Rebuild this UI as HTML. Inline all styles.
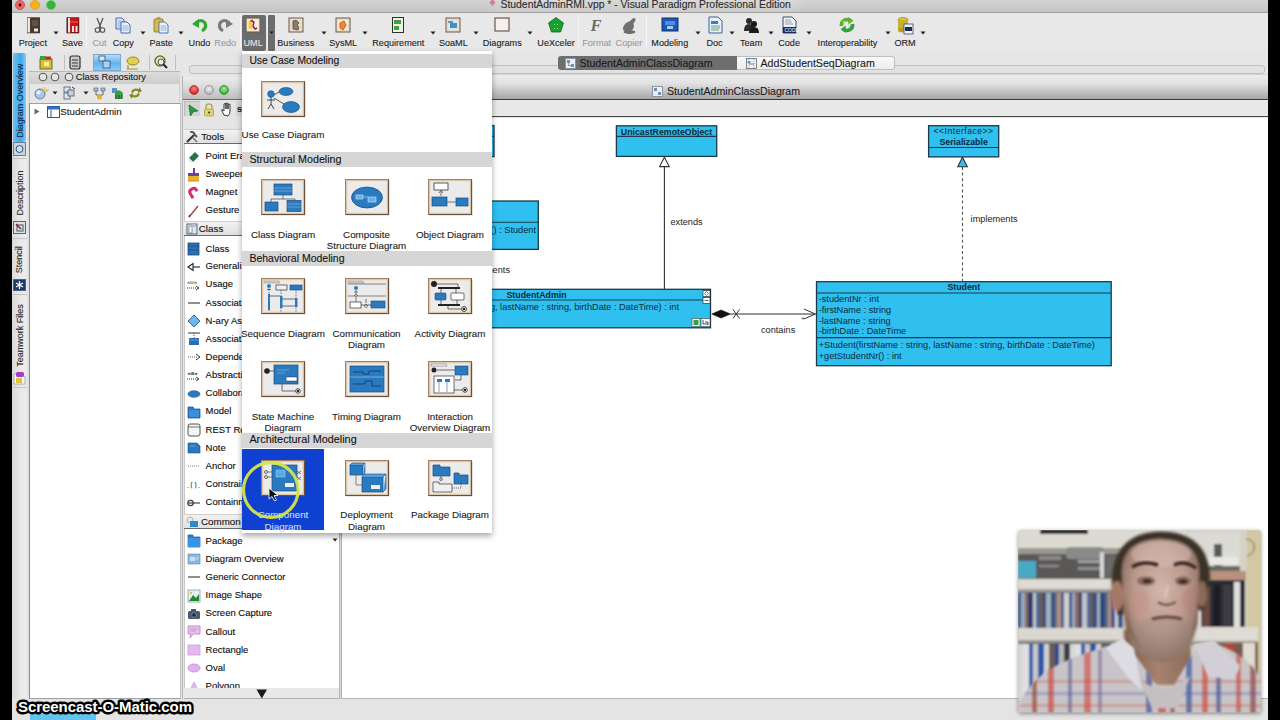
<!DOCTYPE html><html><head><meta charset="utf-8"><style>
*{box-sizing:border-box;margin:0;padding:0}
html,body{width:1280px;height:720px;overflow:hidden;background:#e4e4e4;font-family:"Liberation Sans",sans-serif;color:#222}
.a{position:absolute}
.t{position:absolute;white-space:nowrap;-webkit-text-stroke:0.1px currentColor}
svg{position:absolute;overflow:visible}
</style></head><body><div class="a" style="left:0px;top:0px;width:1280px;height:720px;background:#e4e4e4"></div><div class="a" style="left:12px;top:0px;width:1256px;height:13px;background:linear-gradient(#d4d4d4,#c4c4c4);border-bottom:1px solid #a0a0a0"></div><svg style="left:14.3px;top:-1.3px;" width="12" height="12" viewBox="0 0 12 12"><circle cx="6" cy="6" r="4.6" fill="#e86868" stroke="#d04848" stroke-width="0.8"/></svg><svg style="left:29px;top:-1.3px;" width="12" height="12" viewBox="0 0 12 12"><circle cx="6" cy="6" r="4.6" fill="#f4b020" stroke="#e8a010" stroke-width="0.8"/></svg><svg style="left:44.5px;top:-1.3px;" width="12" height="12" viewBox="0 0 12 12"><circle cx="6" cy="6" r="4.6" fill="#38b040" stroke="#60d060" stroke-width="0.8"/></svg><svg style="left:18.3px;top:2.7px;" width="4" height="4" viewBox="0 0 4 4"><circle cx="2" cy="2" r="1.4" fill="#500808"/></svg><svg style="left:488.5px;top:-1px;" width="7" height="8" viewBox="0 0 7 8"><path d="M3.5 0 L6.5 3.5 L3.5 7 L0.5 3.5Z" fill="#c87890"/></svg><div class="a" style="left:486px;top:0px;width:320px;height:12px;background:linear-gradient(90deg,rgba(255,255,255,0),rgba(255,255,255,0.12) 5%,rgba(255,255,255,0.12) 95%,rgba(255,255,255,0))"></div><div class="t" style="left:500.5px;top:-1.80px;font-size:10.4px;line-height:13.0px;color:#2a2a2a">StudentAdminRMI.vpp * - Visual Paradigm Professional Edition</div><div class="a" style="left:12px;top:13px;width:1256px;height:39px;background:#e8e8e8"></div><div class="a" style="left:242px;top:14.5px;width:24px;height:36px;background:#6c6c6c;border-radius:2px"></div><div class="a" style="left:268px;top:14.5px;width:7px;height:36px;background:#6c6c6c;border-radius:1px"></div><svg style="left:269px;top:30.5px;" width="5" height="4" viewBox="0 0 5 4"><path d="M0.5 0.5H4.5L2.5 3Z" fill="#1a1a1a"/></svg><svg style="left:24.799999999999997px;top:17px;" width="16" height="17" viewBox="0 0 16 17"><rect x="2" y="0.3" width="13" height="16" fill="#4a3a2e"/><rect x="2.5" y="1" width="2.5" height="14.5" fill="#f0e8d8"/><path d="M7 4H13M7 6H13M7 8H13" stroke="#9a8a7a" stroke-width="0.6"/><rect x="9" y="11.5" width="4" height="3" fill="#f0e8d8"/></svg><div class="t" style="left:15.0px;top:37.56px;font-size:9.1px;line-height:11.38px;width:35.6px;text-align:center;color:#222">Project</div><svg style="left:64.4px;top:17px;" width="16" height="17" viewBox="0 0 16 17"><rect x="2.5" y="0.3" width="12.7" height="16" fill="#3a1a1a"/><rect x="3.5" y="1" width="11" height="14.5" fill="#c01818"/><rect x="4" y="1" width="2" height="14.5" fill="#f0e0e0"/><rect x="8" y="9" width="2" height="6" fill="#f0e0e0"/><rect x="11.5" y="9" width="2" height="6" fill="#f0e0e0"/><path d="M6 5 L14 5" stroke="#ff4040" stroke-width="1.5"/></svg><div class="t" style="left:59.5px;top:37.56px;font-size:9.1px;line-height:11.38px;width:25.799999999999997px;text-align:center;color:#222">Save</div><svg style="left:91.55px;top:17px;" width="16" height="17" viewBox="0 0 16 17"><path d="M5 1 L9 11 M11 1 L7 11" stroke="#555" stroke-width="1.3" fill="none"/><circle cx="5.5" cy="13" r="2.3" fill="none" stroke="#555" stroke-width="1.1"/><circle cx="10.5" cy="13" r="2.3" fill="none" stroke="#555" stroke-width="1.1"/></svg><div class="t" style="left:88.5px;top:37.56px;font-size:9.1px;line-height:11.38px;width:22.099999999999994px;text-align:center;color:#9c9c9c">Cut</div><svg style="left:115.30000000000001px;top:17px;" width="16" height="17" viewBox="0 0 16 17"><path d="M1 1H7L9 3V12H1Z" fill="#dcecfc" stroke="#3a5aa0" stroke-width="0.9"/><path d="M2.5 4H7.5M2.5 6H7.5M2.5 8H7.5M2.5 10H7.5" stroke="#5a80c0" stroke-width="0.6"/><path d="M6 5H12L15 8V16H6Z" fill="#e8f4fc" stroke="#3a5aa0" stroke-width="0.9"/><path d="M7.5 9H13.5M7.5 11H13.5M7.5 13H13.5" stroke="#5a80c0" stroke-width="0.6"/></svg><div class="t" style="left:108.8px;top:37.56px;font-size:9.1px;line-height:11.38px;width:29.000000000000014px;text-align:center;color:#222">Copy</div><svg style="left:153.2px;top:17px;" width="16" height="17" viewBox="0 0 16 17"><rect x="1" y="2" width="9" height="13" rx="1" fill="#d8b848" stroke="#8a7020" stroke-width="0.8"/><rect x="3.5" y="0" width="4" height="3" rx="1" fill="#c0a030"/><path d="M6 5H12L15 8V16H6Z" fill="#e8f2fc" stroke="#4070b0" stroke-width="0.9"/><path d="M7.5 9H13.5M7.5 11H13.5M7.5 13H13.5" stroke="#5a80c0" stroke-width="0.6"/></svg><div class="t" style="left:146.7px;top:37.56px;font-size:9.1px;line-height:11.38px;width:29.0px;text-align:center;color:#222">Paste</div><svg style="left:191.5px;top:17px;" width="16" height="17" viewBox="0 0 16 17"><path d="M4 6 Q9 1 13 6 Q15 11 10 14" stroke="#30a830" stroke-width="3.2" fill="none"/><path d="M0 7 L7 2 L7 11Z" fill="#30a830"/></svg><div class="t" style="left:184.6px;top:37.56px;font-size:9.1px;line-height:11.38px;width:29.80000000000001px;text-align:center;color:#222">Undo</div><svg style="left:217.2px;top:17px;" width="16" height="17" viewBox="0 0 16 17"><path d="M12 6 Q7 1 3 6 Q1 11 6 14" stroke="#7a7a7a" stroke-width="3.2" fill="none"/><path d="M16 7 L9 2 L9 11Z" fill="#7a7a7a"/></svg><div class="t" style="left:211.4px;top:37.56px;font-size:9.1px;line-height:11.38px;width:27.599999999999994px;text-align:center;color:#9c9c9c">Redo</div><svg style="left:245.15px;top:17px;" width="16" height="17" viewBox="0 0 16 17"><rect x="1" y="1" width="14" height="14" fill="#e8dcc8" stroke="#6a5a48" stroke-width="1"/><rect x="2.5" y="2.5" width="11" height="11" fill="#f8f0e0"/><rect x="3.5" y="4" width="4" height="8" fill="#f0d040"/><path d="M6 3.5 L9 5 L8 9 L10 12 L12 11" stroke="#8a2060" stroke-width="1.4" fill="none"/><path d="M5 4 L8 3" stroke="#d03030" stroke-width="1.2"/></svg><div class="t" style="left:240.7px;top:37.56px;font-size:9.1px;line-height:11.38px;width:24.900000000000034px;text-align:center;color:#e6e6e6">UML</div><svg style="left:287.75px;top:17px;" width="16" height="17" viewBox="0 0 16 17"><rect x="1" y="1" width="14" height="14" fill="#e8dcc8" stroke="#6a5a48" stroke-width="1"/><path d="M5 4 Q9 2 11 6 L9 8 Q12 10 10 13 L5 12 Z" fill="#8a8070" stroke="#504838" stroke-width="0.8"/></svg><div class="t" style="left:274.5px;top:37.56px;font-size:9.1px;line-height:11.38px;width:42.5px;text-align:center;color:#222">Business</div><svg style="left:335.2px;top:17px;" width="16" height="17" viewBox="0 0 16 17"><rect x="1" y="1" width="14" height="14" fill="#e8dcc8" stroke="#6a5a48" stroke-width="1"/><rect x="3" y="3" width="10" height="10" fill="#f8e8d8"/><path d="M5 6 L9 4 L11 8 L8 13 L5 11Z" fill="#e89030" stroke="#c04020" stroke-width="0.8"/></svg><div class="t" style="left:327.0px;top:37.56px;font-size:9.1px;line-height:11.38px;width:32.39999999999998px;text-align:center;color:#222">SysML</div><svg style="left:390.35px;top:17px;" width="16" height="17" viewBox="0 0 16 17"><rect x="2" y="0" width="12" height="16" fill="#303030"/><rect x="3" y="1" width="10" height="14" fill="#f0f0e8"/><rect x="4" y="3" width="7" height="4" fill="#40a040"/><rect x="4" y="9" width="5" height="4" fill="#40a040"/></svg><div class="t" style="left:368.8px;top:37.56px;font-size:9.1px;line-height:11.38px;width:59.099999999999966px;text-align:center;color:#222">Requirement</div><svg style="left:445.35px;top:17px;" width="16" height="17" viewBox="0 0 16 17"><rect x="1" y="1" width="14" height="14" fill="#e8dcc8" stroke="#6a5a48" stroke-width="1"/><rect x="3" y="3" width="10" height="10" fill="#d8e8f0"/><rect x="5" y="6" width="7" height="5" fill="#4090d0"/><path d="M3 5H8" stroke="#203050"/></svg><div class="t" style="left:436.7px;top:37.56px;font-size:9.1px;line-height:11.38px;width:33.30000000000001px;text-align:center;color:#222">SoaML</div><svg style="left:494.25px;top:17px;" width="16" height="17" viewBox="0 0 16 17"><rect x="1" y="1" width="14" height="13" fill="#f4f0ea" stroke="#6a5a48" stroke-width="1.2"/></svg><div class="t" style="left:479.5px;top:37.56px;font-size:9.1px;line-height:11.38px;width:45.5px;text-align:center;color:#222">Diagrams</div><svg style="left:548.05px;top:17px;" width="16" height="17" viewBox="0 0 16 17"><path d="M8 0.5 L15.5 6 L12.5 15 L3.5 15 L0.5 6Z" fill="#18a030" stroke="#0a6018" stroke-width="0.8"/><path d="M6 7L7 8M10 7L9 8M6 11L7 12M10 11L9 12" stroke="#c0f0c0" stroke-width="0.8"/></svg><div class="t" style="left:534.5px;top:37.56px;font-size:9.1px;line-height:11.38px;width:43.10000000000002px;text-align:center;color:#222">UeXceler</div><svg style="left:588.6500000000001px;top:17px;" width="16" height="17" viewBox="0 0 16 17"><text x="1.5" y="14" font-family="Liberation Serif" font-weight="bold" font-style="italic" font-size="16.5" fill="#6a6a6a">F</text></svg><div class="t" style="left:578.6px;top:37.56px;font-size:9.1px;line-height:11.38px;width:36.10000000000002px;text-align:center;color:#9c9c9c">Format</div><svg style="left:621.0px;top:17px;" width="16" height="17" viewBox="0 0 16 17"><ellipse cx="8.5" cy="15" rx="6" ry="1.9" fill="#6a6a6a"/><path d="M2 11 Q3 6 9 4 L12 1.2 Q15 0.5 14.5 3.5 L12.5 6.5 Q14 11 10 14 L4.5 14 Q1.5 13.5 2 11Z" fill="#707070"/></svg><div class="t" style="left:612.0px;top:37.56px;font-size:9.1px;line-height:11.38px;width:34px;text-align:center;color:#9c9c9c">Copier</div><svg style="left:661.8px;top:17px;" width="16" height="17" viewBox="0 0 16 17"><rect x="0" y="1" width="16" height="13" fill="#1c58b8" stroke="#103070"/><rect x="3" y="4" width="10" height="4" fill="#5090e0"/><rect x="5" y="9" width="6" height="3" fill="#a0c8f0"/></svg><div class="t" style="left:647.6px;top:37.56px;font-size:9.1px;line-height:11.38px;width:44.39999999999998px;text-align:center;color:#222">Modeling</div><svg style="left:706.5px;top:17px;" width="16" height="17" viewBox="0 0 16 17"><path d="M2 0 H11 L15 4 V16 H2Z" fill="#e8f0fa" stroke="#3a60a0"/><rect x="4" y="4" width="7" height="3" fill="#3a80c0"/><path d="M4 9H13M4 11H13M4 13H12" stroke="#509050" stroke-width="0.8"/></svg><div class="t" style="left:703.0px;top:37.56px;font-size:9.1px;line-height:11.38px;width:23px;text-align:center;color:#222">Doc</div><svg style="left:743.15px;top:17px;" width="16" height="17" viewBox="0 0 16 17"><circle cx="6" cy="4" r="3" fill="#2a2a2a"/><path d="M1 14 Q1 7 6 7 Q11 7 11 14Z" fill="#2a2a2a"/><circle cx="11" cy="7" r="3" fill="#1a1a1a"/><path d="M6 16 Q6 10 11 10 Q16 10 16 16Z" fill="#1a1a1a"/></svg><div class="t" style="left:736.3px;top:37.56px;font-size:9.1px;line-height:11.38px;width:29.700000000000045px;text-align:center;color:#222">Team</div><svg style="left:781.0999999999999px;top:17px;" width="16" height="17" viewBox="0 0 16 17"><path d="M2 0 H11 L15 4 V16 H2Z" fill="#eef2f8" stroke="#3a4a70"/><path d="M4 3H10M4 5H11M4 7H12" stroke="#8090a0" stroke-width="0.8"/><rect x="2" y="10" width="13" height="6" fill="#1a2a58"/><text x="3.5" y="15" font-size="5" fill="#fff" font-family="Liberation Sans">CODE</text></svg><div class="t" style="left:774.8px;top:37.56px;font-size:9.1px;line-height:11.38px;width:28.600000000000023px;text-align:center;color:#222">Code</div><svg style="left:839.45px;top:17px;" width="16" height="17" viewBox="0 0 16 17"><path d="M2.5 9 A5.5 5.5 0 0 1 11 3.5" stroke="#58b030" stroke-width="3.6" fill="none"/><path d="M9 0 L14.5 3.5 L9.5 7.5Z" fill="#58b030"/><path d="M13.5 7 A5.5 5.5 0 0 1 5 12.5" stroke="#30a040" stroke-width="3.6" fill="none"/><path d="M7 16 L1.5 12.5 L6.5 8.5Z" fill="#30a040"/><circle cx="5" cy="5" r="1.5" fill="#c8e060" opacity="0.7"/></svg><div class="t" style="left:812.7px;top:37.56px;font-size:9.1px;line-height:11.38px;width:69.5px;text-align:center;color:#222">Interoperability</div><svg style="left:897.05px;top:17px;" width="16" height="17" viewBox="0 0 16 17"><ellipse cx="6" cy="3" rx="5" ry="2.5" fill="#d8c040" stroke="#8a7a20" stroke-width="0.6"/><rect x="1" y="3" width="10" height="10" fill="#c8b030"/><ellipse cx="6" cy="13" rx="5" ry="2.5" fill="#b8a020"/><rect x="7" y="7" width="9" height="10" fill="#eef2f8" stroke="#3a4a70" stroke-width="0.8"/><rect x="8" y="10" width="7" height="4" fill="#1a2a58"/></svg><div class="t" style="left:891.7px;top:37.56px;font-size:9.1px;line-height:11.38px;width:26.699999999999932px;text-align:center;color:#222">ORM</div><svg style="left:53px;top:31px;" width="6" height="4" viewBox="0 0 6 4"><path d="M0.5 0.5H5.5L3 3.5Z" fill="#222"/></svg><svg style="left:140px;top:31px;" width="6" height="4" viewBox="0 0 6 4"><path d="M0.5 0.5H5.5L3 3.5Z" fill="#222"/></svg><svg style="left:177.7px;top:31px;" width="6" height="4" viewBox="0 0 6 4"><path d="M0.5 0.5H5.5L3 3.5Z" fill="#222"/></svg><svg style="left:320.5px;top:31px;" width="6" height="4" viewBox="0 0 6 4"><path d="M0.5 0.5H5.5L3 3.5Z" fill="#222"/></svg><svg style="left:361.8px;top:31px;" width="6" height="4" viewBox="0 0 6 4"><path d="M0.5 0.5H5.5L3 3.5Z" fill="#222"/></svg><svg style="left:430px;top:31px;" width="6" height="4" viewBox="0 0 6 4"><path d="M0.5 0.5H5.5L3 3.5Z" fill="#222"/></svg><svg style="left:472.5px;top:31px;" width="6" height="4" viewBox="0 0 6 4"><path d="M0.5 0.5H5.5L3 3.5Z" fill="#222"/></svg><svg style="left:527.4px;top:31px;" width="6" height="4" viewBox="0 0 6 4"><path d="M0.5 0.5H5.5L3 3.5Z" fill="#222"/></svg><svg style="left:694.6px;top:31px;" width="6" height="4" viewBox="0 0 6 4"><path d="M0.5 0.5H5.5L3 3.5Z" fill="#222"/></svg><svg style="left:729.3px;top:31px;" width="6" height="4" viewBox="0 0 6 4"><path d="M0.5 0.5H5.5L3 3.5Z" fill="#222"/></svg><svg style="left:768px;top:31px;" width="6" height="4" viewBox="0 0 6 4"><path d="M0.5 0.5H5.5L3 3.5Z" fill="#222"/></svg><svg style="left:805.8px;top:31px;" width="6" height="4" viewBox="0 0 6 4"><path d="M0.5 0.5H5.5L3 3.5Z" fill="#222"/></svg><svg style="left:884.6px;top:31px;" width="6" height="4" viewBox="0 0 6 4"><path d="M0.5 0.5H5.5L3 3.5Z" fill="#222"/></svg><svg style="left:920.3px;top:31px;" width="6" height="4" viewBox="0 0 6 4"><path d="M0.5 0.5H5.5L3 3.5Z" fill="#222"/></svg><div class="a" style="left:86px;top:15px;width:1px;height:33px;background:#c4c4c4;border-right:1px solid #f4f4f4"></div><div class="a" style="left:239.8px;top:15px;width:1px;height:33px;background:#c4c4c4;border-right:1px solid #f4f4f4"></div><div class="a" style="left:578px;top:15px;width:1px;height:33px;background:#c4c4c4;border-right:1px solid #f4f4f4"></div><div class="a" style="left:646.4px;top:15px;width:1px;height:33px;background:#c4c4c4;border-right:1px solid #f4f4f4"></div><div class="a" style="left:12px;top:52px;width:17px;height:646px;background:linear-gradient(90deg,#dadada,#e8e8e8 50%,#ececec 80%,#dcdcdc)"></div><div class="a" style="left:12.5px;top:53px;width:13.5px;height:89px;background:linear-gradient(90deg,#6cc0f0,#3aa8ee 60%,#84ccf4);border-radius:2px"></div><div class="a" style="left:13px;top:142px;width:13px;height:14px;background:#c8d4e0;border:1px solid #708090"></div><svg style="left:14px;top:143px;" width="11" height="12" viewBox="0 0 11 12"><circle cx="5.5" cy="6" r="3.5" fill="#c8e0f8" stroke="#305070" stroke-width="1"/></svg><div class="t" style="left:-17.150000000000006px;top:95.15px;width:73.30000000000001px;height:12px;font-size:9px;line-height:12px;text-align:center;transform:rotate(-90deg);color:#1a2a48">Diagram Overview</div><div class="a" style="left:12.5px;top:158px;width:14px;height:1px;background:#c4c4c4"></div><div class="t" style="left:-3.3999999999999915px;top:186.7px;width:45.79999999999998px;height:12px;font-size:9px;line-height:12px;text-align:center;transform:rotate(-90deg);color:#2a2a2a">Description</div><div class="a" style="left:13px;top:221px;width:13px;height:13px;background:#d8e0e8;border:1px solid #4a6a8a"></div><svg style="left:15px;top:223px;" width="9" height="9" viewBox="0 0 9 9"><path d="M1 1 L6 6" stroke="#a02020" stroke-width="1.5"/><rect x="2" y="2" width="6" height="6" fill="none" stroke="#203040" stroke-width="0.8"/></svg><div class="a" style="left:12.5px;top:238px;width:14px;height:1px;background:#c4c4c4"></div><div class="t" style="left:6.25px;top:254.25px;width:26.5px;height:12px;font-size:9px;line-height:12px;text-align:center;transform:rotate(-90deg);color:#2a2a2a">Stencil</div><div class="a" style="left:13px;top:279px;width:13px;height:12px;background:#1a3a6a;border:1px solid #506080"></div><svg style="left:15px;top:280px;" width="9" height="10" viewBox="0 0 9 10"><path d="M4.5 1V9M1 3L8 7M8 3L1 7" stroke="#fff" stroke-width="1.3"/></svg><div class="a" style="left:12.5px;top:294px;width:14px;height:1px;background:#c4c4c4"></div><div class="t" style="left:-11.349999999999994px;top:329.85px;width:61.69999999999999px;height:12px;font-size:9px;line-height:12px;text-align:center;transform:rotate(-90deg);color:#2a2a2a">Teamwork Files</div><svg style="left:13px;top:371px;" width="13" height="14" viewBox="0 0 13 14"><path d="M1 3 H9 L12 6 V13 H1Z" fill="#f8f8f0" stroke="#808080" stroke-width="0.6"/><rect x="3" y="1" width="8" height="5" rx="1.5" fill="#a040c0"/><rect x="3" y="7" width="6" height="5" fill="#e0c040"/></svg><div class="a" style="left:12.5px;top:387px;width:14px;height:1px;background:#c4c4c4"></div><div class="a" style="left:28px;top:52px;width:154px;height:18px;background:#e6e6e6"></div><div class="a" style="left:92.5px;top:53.8px;width:28px;height:17px;background:linear-gradient(#b8dcf8,#5eb4ee 55%,#8ccaf4);border:1px solid #7aa8d0"></div><svg style="left:38.5px;top:54.5px;" width="14" height="15" viewBox="0 0 14 15"><rect x="1" y="4" width="12" height="10" fill="#d8c030" stroke="#5a4a10" stroke-width="0.8"/><rect x="1" y="1" width="6" height="4" fill="#38a040"/><rect x="7" y="1.5" width="5" height="3" fill="#b03030"/><rect x="5" y="7" width="5" height="4" fill="#f8f0a0"/></svg><svg style="left:68.5px;top:54.5px;" width="14" height="15" viewBox="0 0 14 15"><rect x="1" y="1" width="10" height="13" rx="2" fill="#c8c8c8" stroke="#303030" stroke-width="1.2"/><path d="M3 5H9M3 8H9M3 11H9" stroke="#303030" stroke-width="0.9"/></svg><svg style="left:97.5px;top:54.5px;" width="14" height="15" viewBox="0 0 14 15"><rect x="1" y="1" width="6" height="5" fill="#d0e8f8" stroke="#305070" stroke-width="0.8"/><rect x="5" y="6" width="7" height="7" fill="#b0d0f0" stroke="#305070" stroke-width="0.8"/></svg><svg style="left:125.5px;top:54.5px;" width="14" height="15" viewBox="0 0 14 15"><ellipse cx="7" cy="6" rx="6" ry="4" fill="#e0d050" stroke="#807010" stroke-width="0.8"/><path d="M1 14H12M2 10V14" stroke="#a09020" stroke-width="1.2"/></svg><svg style="left:153.5px;top:54.5px;" width="14" height="15" viewBox="0 0 14 15"><circle cx="6" cy="6" r="5" fill="#d8e8c0" stroke="#6a7a20" stroke-width="1.5"/><circle cx="7" cy="7" r="3" fill="#e0ecf8" stroke="#303030" stroke-width="0.8"/><path d="M9.5 9.5 L13 13" stroke="#202020" stroke-width="2"/></svg><div class="a" style="left:63.5px;top:55px;width:1px;height:15px;background:#c0c0c0"></div><div class="a" style="left:148.5px;top:55px;width:1px;height:15px;background:#c0c0c0"></div><div class="a" style="left:175.4px;top:55px;width:1px;height:15px;background:#c0c0c0"></div><div class="a" style="left:29px;top:70.5px;width:151px;height:13px;background:linear-gradient(#dcdcdc,#cdcdcd);border-top:1px solid #b8b8b8"></div><svg style="left:37.9px;top:72px;" width="10" height="10" viewBox="0 0 10 10"><circle cx="5" cy="5" r="3.8" fill="#e4e4e4" stroke="#5a5a5a" stroke-width="1.1"/></svg><svg style="left:50.4px;top:72px;" width="10" height="10" viewBox="0 0 10 10"><circle cx="5" cy="5" r="3.8" fill="#e4e4e4" stroke="#5a5a5a" stroke-width="1.1"/></svg><svg style="left:63.5px;top:72px;" width="10" height="10" viewBox="0 0 10 10"><circle cx="5" cy="5" r="3.8" fill="#e4e4e4" stroke="#5a5a5a" stroke-width="1.1"/></svg><div class="t" style="left:75.7px;top:71.67px;font-size:9.3px;line-height:11.62px;color:#1a1a1a">Class Repository</div><div class="a" style="left:29px;top:83.5px;width:151px;height:20px;background:#e6e6e6;border-left:1px solid #d0d0d0;border-right:1px solid #d0d0d0"></div><svg style="left:34px;top:86px;" width="14" height="14" viewBox="0 0 14 14"><circle cx="6" cy="8" r="5" fill="#a8c8e8" stroke="#506880" stroke-width="0.8"/><circle cx="4.5" cy="6.5" r="2" fill="#e8f4fc"/><path d="M10 1 L11 4 L14 4 L11.5 6" stroke="#e8c020" stroke-width="1.2" fill="none"/></svg><svg style="left:52px;top:91px;" width="6" height="4" viewBox="0 0 6 4"><path d="M0.5 0.5H5.5L3 3.5Z" fill="#222"/></svg><svg style="left:63px;top:86px;" width="14" height="15" viewBox="0 0 14 15"><rect x="1" y="1" width="6" height="5" fill="#e0e8f0" stroke="#4a5a6a" stroke-width="0.8"/><rect x="1" y="7" width="6" height="6" fill="#e0e8f0" stroke="#4a5a6a" stroke-width="0.8"/><rect x="5" y="4" width="6" height="6" fill="#c0d0e0" stroke="#4a5a6a" stroke-width="0.8"/><path d="M9 1 L12 3" stroke="#404040"/></svg><svg style="left:83px;top:91px;" width="6" height="4" viewBox="0 0 6 4"><path d="M0.5 0.5H5.5L3 3.5Z" fill="#222"/></svg><svg style="left:93px;top:87px;" width="13" height="13" viewBox="0 0 13 13"><rect x="1" y="1" width="4" height="3" fill="#a0c0e0" stroke="#4a5a6a" stroke-width="0.6"/><rect x="8" y="1" width="4" height="3" fill="#a0c0e0" stroke="#4a5a6a" stroke-width="0.6"/><path d="M3 4V8H10V4" stroke="#4a4a4a" stroke-width="0.8" fill="none"/><circle cx="6.5" cy="10" r="2.5" fill="#e8b030"/></svg><svg style="left:111px;top:86px;" width="13" height="14" viewBox="0 0 13 14"><rect x="1" y="2" width="5" height="5" fill="#6090c0"/><path d="M4 6 Q8 2 12 7 L11 13 H4Z" fill="#38a040"/><path d="M5 9V13M8 9V13M11 9V13" stroke="#203040" stroke-width="0.8"/></svg><svg style="left:129px;top:86px;" width="13" height="14" viewBox="0 0 13 14"><path d="M2 6 Q4 1 10 3 L10 1 L13 5 L9 7 L9 5 Q5 4 4 7Z" fill="#8a8a20"/><path d="M11 8 Q9 13 3 11 L3 13 L0 9 L4 7 L4 9 Q8 10 9 7Z" fill="#8a8a20"/></svg><div class="a" style="left:29px;top:103px;width:152px;height:596px;background:#fff;border:1px solid #a0a0a0;border-left-color:#8a8a8a;border-right-color:#c0c0c0"></div><svg style="left:34px;top:108px;" width="6" height="7" viewBox="0 0 6 7"><path d="M0.5 0.5 L5.5 3.5 L0.5 6.5Z" fill="#6a6a6a"/></svg><svg style="left:46.5px;top:105.5px;" width="13" height="12" viewBox="0 0 13 12"><rect x="0.5" y="0.5" width="12" height="11" fill="#fff" stroke="#3050a0"/><rect x="0.5" y="0.5" width="12" height="3" fill="#3070c0"/><path d="M4 3.5V11.5" stroke="#3050a0"/></svg><div class="t" style="left:60.2px;top:106px;font-size:9.8px;line-height:11.8px;color:#1a1a1a">StudentAdmin</div><div class="a" style="left:183px;top:52px;width:1085px;height:24px;background:#e6e6e6"></div><div class="a" style="left:189px;top:64.6px;width:1076px;height:9px;background:#e2e2e2;border:1px solid #c0c0c0;border-radius:3px"></div><div class="a" style="left:557.7px;top:55.7px;width:179.5px;height:14.8px;background:#6e6e6e;border-radius:3px 0 0 3px"></div><svg style="left:565px;top:58px;" width="11" height="11" viewBox="0 0 11 11"><rect x="0.5" y="0.5" width="10" height="10" fill="#e8eef4" stroke="#8090a0" stroke-width="0.8"/><rect x="2" y="2" width="3" height="3" fill="#7090b0"/><rect x="6" y="6" width="3" height="3" fill="#7090b0"/><path d="M3.5 5V7.5H6" stroke="#506070" stroke-width="0.6" fill="none"/></svg><div class="t" style="left:579.4px;top:56.5px;font-size:10.6px;line-height:12.6px;color:#1a1a1a">StudentAdminClassDiagram</div><div class="a" style="left:737px;top:55.7px;width:157.5px;height:14.8px;background:linear-gradient(#fafafa,#ececec);border:1px solid #c0c0c0;border-left:none;border-radius:0 3px 3px 0"></div><svg style="left:746px;top:58px;" width="11" height="11" viewBox="0 0 11 11"><rect x="0.5" y="0.5" width="10" height="10" fill="#f0f4f8" stroke="#606a78" stroke-width="0.8"/><path d="M3 1V10M8 1V10" stroke="#606a78" stroke-width="0.6" stroke-dasharray="1 1"/><rect x="1.5" y="3" width="3" height="2" fill="#7090b0"/><path d="M3 6H8" stroke="#404a58" stroke-width="0.7"/></svg><div class="t" style="left:760.5px;top:56.5px;font-size:10.6px;line-height:12.6px;color:#1a1a1a">AddStudentSeqDiagram</div><div class="a" style="left:342px;top:73.5px;width:926px;height:26.5px;background:linear-gradient(#ececec,#e2e2e2 35%,#a6a6a6);border-top:1px solid #d4d4d4;border-bottom:1.5px solid #3a3a3a"></div><svg style="left:652px;top:85px;" width="11" height="12" viewBox="0 0 11 12"><rect x="0.5" y="1.5" width="10" height="10" fill="#e8eef4" stroke="#7a8898" stroke-width="0.8"/><rect x="2" y="3" width="3" height="3" fill="#7090b0"/><rect x="6" y="7" width="3" height="3" fill="#7090b0"/></svg><div class="t" style="left:667px;top:84.5px;font-size:10.6px;line-height:12.6px;color:#1a1a1a">StudentAdminClassDiagram</div><div class="a" style="left:342px;top:100px;width:926px;height:17px;background:#e8e8e8;border-bottom:1.5px solid #4a4a4a"></div><div class="a" style="left:342px;top:117.5px;width:926px;height:580.5px;background:#fff"></div><div class="a" style="left:342px;top:698px;width:926px;height:22px;background:#e4e4e4;border-top:1px solid #b8b8b8"></div><div class="a" style="left:182px;top:76px;width:160px;height:623px;background:#e6e6e6;border-left:1px solid #b4b4b4"></div><div class="a" style="left:183px;top:77px;width:158px;height:23px;background:linear-gradient(#ececec,#d8d8d8 50%,#bdbdbd);border-bottom:1px solid #6a6a6a"></div><svg style="left:188.8px;top:85.4px;" width="10" height="10" viewBox="0 0 10 10"><defs><radialGradient id="g193" cx="0.5" cy="0.35" r="0.6"><stop offset="0" stop-color="#ff8080"/><stop offset="1" stop-color="#e02020"/></radialGradient></defs><circle cx="5" cy="5" r="4.4" fill="url(#g193)" stroke="#901010" stroke-width="0.7"/></svg><svg style="left:203.8px;top:85.4px;" width="10" height="10" viewBox="0 0 10 10"><defs><radialGradient id="g208" cx="0.5" cy="0.35" r="0.6"><stop offset="0" stop-color="#f0f0f0"/><stop offset="1" stop-color="#b8b8b8"/></radialGradient></defs><circle cx="5" cy="5" r="4.4" fill="url(#g208)" stroke="#808080" stroke-width="0.7"/></svg><svg style="left:219px;top:85.4px;" width="10" height="10" viewBox="0 0 10 10"><defs><radialGradient id="g224" cx="0.5" cy="0.35" r="0.6"><stop offset="0" stop-color="#a0f090"/><stop offset="1" stop-color="#30b030"/></radialGradient></defs><circle cx="5" cy="5" r="4.4" fill="url(#g224)" stroke="#207020" stroke-width="0.7"/></svg><div class="a" style="left:183px;top:100px;width:158px;height:29px;background:#e4e4e4"></div><div class="a" style="left:184.3px;top:101px;width:15.5px;height:15px;background:#d4d4d4;border-left:1px solid #bcbcbc;border-top:1px solid #bcbcbc"></div><svg style="left:187px;top:103.5px;" width="13" height="13" viewBox="0 0 13 13"><path d="M2 1 L11 7 L6.5 7.5 L3.5 12Z" fill="#20a040" stroke="#106020" stroke-width="0.7"/></svg><svg style="left:203px;top:103px;" width="12" height="14" viewBox="0 0 12 14"><path d="M3 6 V4 Q3 1 6 1 Q9 1 9 4 V6" fill="none" stroke="#b8a850" stroke-width="1.5"/><rect x="1.5" y="6" width="9" height="7" rx="1" fill="#e0d070" stroke="#a89838" stroke-width="0.7"/><circle cx="6" cy="9.5" r="1.1" fill="#504010"/></svg><svg style="left:220px;top:102px;" width="12" height="15" viewBox="0 0 12 15"><path d="M4 13 L2 9 Q1 7 3 8 L4 9 V2 Q5 1 6 2 V7 V1.5 Q7 0.5 8 1.5 V7 V2.5 Q9 1.5 10 2.5 V9 Q10 12 8 14Z" fill="#fff" stroke="#222" stroke-width="0.9"/></svg><div class="a" style="left:236px;top:101px;width:6px;height:15px;background:#d8d8d8"></div><div class="t" style="left:237px;top:104px;font-size:9px;line-height:11px;color:#222;font-weight:bold">s</div><div class="a" style="left:184px;top:129px;width:155px;height:559px;background:#fff;border-left:1px solid #c8c8c8"></div><div class="a" style="left:339px;top:100px;width:2.5px;height:599px;background:#d8d8d8;border-left:1px solid #b8b8b8;border-right:1px solid #b0b0b0"></div><div class="a" style="left:184px;top:129.4px;width:155px;height:14.199999999999989px;background:linear-gradient(#f2f2f2,#e0e0e0);border-top:1px solid #cfcfcf;border-bottom:1.2px solid #6a6a6a"></div><svg style="left:186px;top:131.4px;" width="13" height="12" viewBox="0 0 13 12"><path d="M1 11 L8 4" stroke="#303030" stroke-width="2"/><path d="M4 1 Q8 0 9 4 L11 6" stroke="#505050" stroke-width="1.8" fill="none"/><path d="M7 7 L11 11" stroke="#707070" stroke-width="1.5"/></svg><div class="t" style="left:201.2px;top:130.68px;font-size:9.8px;line-height:12.25px;color:#111">Tools</div><div class="a" style="left:184px;top:221.25px;width:155px;height:14.550000000000011px;background:linear-gradient(#f2f2f2,#e0e0e0);border-top:1px solid #cfcfcf;border-bottom:1.2px solid #6a6a6a"></div><svg style="left:186px;top:223.25px;" width="13" height="12" viewBox="0 0 13 12"><rect x="1" y="1" width="10" height="10" fill="#e0e8f0" stroke="#505a68" stroke-width="0.9"/><rect x="3" y="3" width="3" height="7" fill="#fff" stroke="#505a68" stroke-width="0.6"/><rect x="6" y="1" width="4" height="3" fill="#b0c0d0"/></svg><div class="t" style="left:198.8px;top:223.38px;font-size:9.8px;line-height:12.25px;color:#111">Class</div><div class="a" style="left:184px;top:514.4px;width:155px;height:14.200000000000045px;background:linear-gradient(#f2f2f2,#e0e0e0);border-top:1px solid #cfcfcf;border-bottom:1.2px solid #6a6a6a"></div><svg style="left:186px;top:516.4px;" width="13" height="12" viewBox="0 0 13 12"><circle cx="4" cy="4" r="3" fill="#e8e8e8" stroke="#909090" stroke-width="0.6"/><rect x="4" y="5" width="8" height="6" fill="#2a88d0"/></svg><div class="t" style="left:201px;top:515.58px;font-size:9.8px;line-height:12.25px;color:#111">Common</div><svg style="left:187px;top:149px;" width="14" height="14" viewBox="0 0 14 14"><path d="M2 9 L8 3 L12 7 L6 13Z" fill="#287050"/><path d="M2 9 L6 13 L4 14 L1 11Z" fill="#e8f0e8"/></svg><div class="t" style="left:205.6px;top:149.67px;font-size:9.5px;line-height:11.88px;color:#0a0a0a">Point Eraser</div><svg style="left:187px;top:167.2px;" width="14" height="14" viewBox="0 0 14 14"><rect x="1" y="8" width="11" height="6" fill="#e8b030"/><rect x="1" y="6" width="11" height="3" fill="#7040a0"/><rect x="6" y="1" width="2" height="6" fill="#6040a0"/><path d="M1 14H12" stroke="#c89020"/></svg><div class="t" style="left:205.6px;top:167.87px;font-size:9.5px;line-height:11.88px;color:#0a0a0a">Sweeper</div><svg style="left:187px;top:185.6px;" width="14" height="14" viewBox="0 0 14 14"><path d="M2 5 Q2 1 7 1 Q12 1 12 5 L12 7 L9 7 L9 5 Q9 4 7 4 Q5 4 5 5 L5 11 L2 11Z" transform="rotate(-30 7 7)" fill="#d03070"/></svg><div class="t" style="left:205.6px;top:186.27px;font-size:9.5px;line-height:11.88px;color:#0a0a0a">Magnet</div><svg style="left:187px;top:203.8px;" width="14" height="14" viewBox="0 0 14 14"><path d="M2 13 L11 2" stroke="#a05060" stroke-width="1.6"/><path d="M2 13 L3 11" stroke="#404040" stroke-width="1.6"/></svg><div class="t" style="left:205.6px;top:204.47px;font-size:9.5px;line-height:11.88px;color:#0a0a0a">Gesture</div><svg style="left:187px;top:241.9px;" width="14" height="14" viewBox="0 0 14 14"><rect x="1" y="1" width="11" height="12" fill="#2a70b0" stroke="#1a4a80" stroke-width="0.8"/><path d="M1 4H12M1 8H12" stroke="#1a4a80" stroke-width="0.7"/></svg><div class="t" style="left:205.6px;top:242.57px;font-size:9.5px;line-height:11.88px;color:#0a0a0a">Class</div><svg style="left:187px;top:259.8px;" width="14" height="14" viewBox="0 0 14 14"><path d="M1 7 L6 3.5 L6 10.5Z" fill="#fff" stroke="#222" stroke-width="1.1"/><path d="M6 7 H13" stroke="#222" stroke-width="1.1"/></svg><div class="t" style="left:205.6px;top:260.47px;font-size:9.5px;line-height:11.88px;color:#0a0a0a">Generalization</div><svg style="left:187px;top:277.8px;" width="14" height="14" viewBox="0 0 14 14"><text x="0" y="6" font-size="6" font-family="Liberation Sans" fill="#333">«u»</text><path d="M0 10 H11" stroke="#333" stroke-width="1" stroke-dasharray="1 1"/><path d="M9 8 L12 10 L9 12" stroke="#333" fill="none" stroke-width="0.9"/></svg><div class="t" style="left:205.6px;top:278.47px;font-size:9.5px;line-height:11.88px;color:#0a0a0a">Usage</div><svg style="left:187px;top:296px;" width="14" height="14" viewBox="0 0 14 14"><path d="M1 7 H13" stroke="#333" stroke-width="1.1"/></svg><div class="t" style="left:205.6px;top:296.67px;font-size:9.5px;line-height:11.88px;color:#0a0a0a">Association</div><svg style="left:187px;top:314px;" width="14" height="14" viewBox="0 0 14 14"><path d="M7 1 L13 7 L7 13 L1 7Z" fill="#70b8e8" stroke="#2a6aa0" stroke-width="1"/></svg><div class="t" style="left:205.6px;top:314.67px;font-size:9.5px;line-height:11.88px;color:#0a0a0a">N-ary Association</div><svg style="left:187px;top:332.2px;" width="14" height="14" viewBox="0 0 14 14"><path d="M1 1 H13" stroke="#333" stroke-width="1"/><path d="M7 1V6" stroke="#333" stroke-width="0.8" stroke-dasharray="1 1"/><rect x="2" y="6" width="10" height="7" fill="#2a70b0"/><path d="M2 8H12" stroke="#90c0e0" stroke-width="0.6"/></svg><div class="t" style="left:205.6px;top:332.87px;font-size:9.5px;line-height:11.88px;color:#0a0a0a">Association Class</div><svg style="left:187px;top:350.4px;" width="14" height="14" viewBox="0 0 14 14"><path d="M1 7 H11" stroke="#444" stroke-width="0.9" stroke-dasharray="1 1"/><path d="M9 4 L13 7 L9 10" stroke="#333" fill="none" stroke-width="1"/></svg><div class="t" style="left:205.6px;top:351.07px;font-size:9.5px;line-height:11.88px;color:#0a0a0a">Dependency</div><svg style="left:187px;top:368.5px;" width="14" height="14" viewBox="0 0 14 14"><text x="0.5" y="6" font-size="6" font-weight="bold" font-family="Liberation Sans" fill="#333">«a»</text><path d="M0 10 H11" stroke="#333" stroke-width="1" stroke-dasharray="1 1"/><path d="M9 8 L12 10 L9 12" stroke="#333" fill="none" stroke-width="0.9"/></svg><div class="t" style="left:205.6px;top:369.17px;font-size:9.5px;line-height:11.88px;color:#0a0a0a">Abstraction</div><svg style="left:187px;top:386.6px;" width="14" height="14" viewBox="0 0 14 14"><ellipse cx="7" cy="7" rx="6" ry="3.3" fill="#2a78c0" stroke="#1a5090" stroke-width="0.6"/></svg><div class="t" style="left:205.6px;top:387.27px;font-size:9.5px;line-height:11.88px;color:#0a0a0a">Collaboration</div><svg style="left:187px;top:404.8px;" width="14" height="14" viewBox="0 0 14 14"><path d="M1 2 H6 L7 4 H13 V13 H1Z" fill="#2a80d0" stroke="#1a4a80" stroke-width="0.7"/><rect x="2" y="5" width="10" height="7" fill="#3a90e0"/></svg><div class="t" style="left:205.6px;top:405.47px;font-size:9.5px;line-height:11.88px;color:#0a0a0a">Model</div><svg style="left:187px;top:423px;" width="14" height="14" viewBox="0 0 14 14"><rect x="1" y="1" width="12" height="12" rx="2" fill="#f4f4f4" stroke="#555" stroke-width="1"/><path d="M1 4H13" stroke="#555" stroke-width="0.8"/></svg><div class="t" style="left:205.6px;top:423.67px;font-size:9.5px;line-height:11.88px;color:#0a0a0a">REST Resource</div><svg style="left:187px;top:441.2px;" width="14" height="14" viewBox="0 0 14 14"><path d="M1 2 H10 L13 5 V12 H1Z" fill="#2a78c0" stroke="#1a5090" stroke-width="0.6"/><path d="M3 5H8" stroke="#90c0f0" stroke-width="0.6"/></svg><div class="t" style="left:205.6px;top:441.87px;font-size:9.5px;line-height:11.88px;color:#0a0a0a">Note</div><svg style="left:187px;top:459.4px;" width="14" height="14" viewBox="0 0 14 14"><path d="M1 7 H13" stroke="#666" stroke-width="0.9" stroke-dasharray="1 1"/></svg><div class="t" style="left:205.6px;top:460.07px;font-size:9.5px;line-height:11.88px;color:#0a0a0a">Anchor</div><svg style="left:187px;top:477.5px;" width="14" height="14" viewBox="0 0 14 14"><text x="0" y="10" font-size="9" font-family="Liberation Serif" fill="#333">.{}.</text></svg><div class="t" style="left:205.6px;top:478.17px;font-size:9.5px;line-height:11.88px;color:#0a0a0a">Constraint</div><svg style="left:187px;top:495.7px;" width="14" height="14" viewBox="0 0 14 14"><circle cx="3.5" cy="7" r="2.7" fill="#e8e8e8" stroke="#333" stroke-width="1.1"/><path d="M1 7H6" stroke="#333"/><path d="M6 7 H13" stroke="#333" stroke-width="1.1"/></svg><div class="t" style="left:205.6px;top:496.37px;font-size:9.5px;line-height:11.88px;color:#0a0a0a">Containment</div><svg style="left:187px;top:534px;" width="14" height="14" viewBox="0 0 14 14"><path d="M1 1 H6 V3 H13 V13 H1Z" fill="#2a80d0" stroke="#1a5aa0" stroke-width="0.7"/><rect x="1" y="4" width="12" height="9" fill="#3a94e4"/></svg><div class="t" style="left:205.6px;top:534.67px;font-size:9.5px;line-height:11.88px;color:#0a0a0a">Package</div><svg style="left:187px;top:552.2px;" width="14" height="14" viewBox="0 0 14 14"><rect x="1" y="2" width="12" height="10" fill="#88b8e0" stroke="#5a88b0" stroke-width="0.6"/><rect x="3" y="5" width="5" height="4" fill="#c8e0f4"/><path d="M8 7 H11 V4" stroke="#c8e0f4" stroke-width="0.8" fill="none"/></svg><div class="t" style="left:205.6px;top:552.87px;font-size:9.5px;line-height:11.88px;color:#0a0a0a">Diagram Overview</div><svg style="left:187px;top:570.4px;" width="14" height="14" viewBox="0 0 14 14"><path d="M1 7 H13" stroke="#333" stroke-width="1.1"/></svg><div class="t" style="left:205.6px;top:571.07px;font-size:9.5px;line-height:11.88px;color:#0a0a0a">Generic Connector</div><svg style="left:187px;top:588.6px;" width="14" height="14" viewBox="0 0 14 14"><rect x="1" y="1" width="12" height="12" fill="#e8f0f4" stroke="#8a9aa8" stroke-width="0.8"/><path d="M2 12 L6 6 L9 9 L12 5 V12Z" fill="#208a30"/><circle cx="4" cy="4" r="1.2" fill="#e8c030"/></svg><div class="t" style="left:205.6px;top:589.27px;font-size:9.5px;line-height:11.88px;color:#0a0a0a">Image Shape</div><svg style="left:187px;top:606.8px;" width="14" height="14" viewBox="0 0 14 14"><rect x="1" y="4" width="12" height="8" rx="1.5" fill="#4a5a6a"/><rect x="4" y="2" width="5" height="3" fill="#4a5a6a"/><circle cx="7" cy="8" r="2.3" fill="#1a2a3a" stroke="#a0b0c0" stroke-width="0.6"/></svg><div class="t" style="left:205.6px;top:607.47px;font-size:9.5px;line-height:11.88px;color:#0a0a0a">Screen Capture</div><svg style="left:187px;top:625px;" width="14" height="14" viewBox="0 0 14 14"><path d="M1 1 H13 V9 H6 L3 13 L4 9 H1Z" fill="#e8c0f0" stroke="#b080c0" stroke-width="0.8"/><path d="M3 4H11M3 6H9" stroke="#b080c0" stroke-width="0.6"/></svg><div class="t" style="left:205.6px;top:625.67px;font-size:9.5px;line-height:11.88px;color:#0a0a0a">Callout</div><svg style="left:187px;top:643.2px;" width="14" height="14" viewBox="0 0 14 14"><rect x="1" y="2" width="12" height="10" fill="#e4b8f0" stroke="#c8a0d8" stroke-width="0.8"/></svg><div class="t" style="left:205.6px;top:643.87px;font-size:9.5px;line-height:11.88px;color:#0a0a0a">Rectangle</div><svg style="left:187px;top:661.4px;" width="14" height="14" viewBox="0 0 14 14"><ellipse cx="7" cy="7" rx="6" ry="4" fill="#e0b0f0" stroke="#c090d0" stroke-width="0.8"/></svg><div class="t" style="left:205.6px;top:662.07px;font-size:9.5px;line-height:11.88px;color:#0a0a0a">Oval</div><svg style="left:187px;top:679.6px;" width="14" height="14" viewBox="0 0 14 14"><path d="M7 2 L12 12 H2Z" fill="#e0b8f0" stroke="#c8a0d8" stroke-width="0.8"/></svg><div class="t" style="left:205.6px;top:680.27px;font-size:9.5px;line-height:11.88px;color:#0a0a0a">Polygon</div><svg style="left:331.5px;top:538px;" width="6" height="4" viewBox="0 0 6 4"><path d="M0.5 0.5H5.5L3 3.5Z" fill="#222"/></svg><div class="a" style="left:184px;top:688px;width:155px;height:11px;background:#e8e8e8;border-bottom:1px solid #b0b0b0"></div><svg style="left:256px;top:689px;" width="12" height="10" viewBox="0 0 12 10"><path d="M0.5 0.5 H11 L5.8 9.5Z" fill="#1a1a1a"/></svg><svg style="left:0px;top:0px;" width="1280" height="720" viewBox="0 0 1280 720"><rect x="430" y="125.6" width="64" height="31.0" fill="#30c0f0" stroke="#1a3a48" stroke-width="1.3"/><path d="M430 136.4H494" stroke="#1a3a48" stroke-width="1.1"/><rect x="420" y="201" width="118.29999999999995" height="48.400000000000006" fill="#30c0f0" stroke="#1a3a48" stroke-width="1.3"/><path d="M420 222.2H538.3" stroke="#1a3a48" stroke-width="1.1"/><text x="536" y="233" font-family="Liberation Sans" font-size="9.2" font-weight="normal" text-anchor="end" fill="#0a2a3a">getStudent() : Student</text><text x="510" y="272.5" font-family="Liberation Sans" font-size="9.2" font-weight="normal" text-anchor="end" fill="#222">implements</text><rect x="616.4" y="125.8" width="100.30000000000007" height="30.60000000000001" fill="#30c0f0" stroke="#1a3a48" stroke-width="1.3"/><path d="M616.4 136.4H716.7" stroke="#1a3a48" stroke-width="1.1"/><text x="666.5" y="134.8" font-family="Liberation Sans" font-size="8.8" font-weight="bold" text-anchor="middle" fill="#0a2a3a">UnicastRemoteObject</text><path d="M664.4 166.4 V289.3" stroke="#333" stroke-width="1.1"/><path d="M664.4 157.2 L669.2 166.6 L659.6 166.6Z" fill="#fff" stroke="#333" stroke-width="1.1"/><text x="670.5" y="225.3" font-family="Liberation Sans" font-size="9.2" font-weight="normal" text-anchor="start" fill="#222">extends</text><rect x="420" y="289.3" width="290.5" height="38.5" fill="#30c0f0" stroke="#1a3a48" stroke-width="1.3"/><path d="M420 300H710.5" stroke="#1a3a48" stroke-width="1.1"/><text x="506.5" y="298.2" font-family="Liberation Sans" font-size="8.8" font-weight="bold" text-anchor="start" fill="#0a2a3a">StudentAdmin</text><text x="679" y="309.8" font-family="Liberation Sans" font-size="9.2" font-weight="normal" text-anchor="end" fill="#0a2a3a">+addStudent(firstName : string, lastName : string, birthDate : DateTime) : int</text><rect x="703" y="290.5" width="7" height="6" fill="#fff" stroke="#333" stroke-width="0.7"/><path d="M704.5 293.5 L706.5 291.5 L708.5 293.5 L706.5 295.5Z" fill="none" stroke="#333" stroke-width="0.6"/><rect x="703" y="297.5" width="7" height="6" fill="#fff" stroke="#333" stroke-width="0.7"/><path d="M704.5 300.5 H708.5" stroke="#333" stroke-width="0.8"/><rect x="692" y="318.5" width="8" height="8" fill="#fff" stroke="#444" stroke-width="0.6"/><rect x="693.5" y="320" width="5" height="5" fill="#30a040"/><rect x="701" y="318.5" width="9" height="8" fill="#fff" stroke="#444" stroke-width="0.6"/><path d="M703 320 V324 H708 M705 322 H708 V325" stroke="#222" stroke-width="0.8" fill="none"/><path d="M711.8 314 L721 310 L730.4 314 L721 318Z" fill="#111" stroke="#111" stroke-width="0.6"/><path d="M730.4 314 H815.4" stroke="#333" stroke-width="1.1"/><path d="M733 309.5 L739.5 318.5 M739.5 309.5 L733 318.5" stroke="#333" stroke-width="1"/><path d="M804 309 L815.4 314 L804 319" fill="none" stroke="#333" stroke-width="1"/><text x="801.5" y="321.5" font-family="Liberation Sans" font-size="7" font-weight="normal" text-anchor="start" fill="#333">*</text><text x="761" y="332.5" font-family="Liberation Sans" font-size="9.2" font-weight="normal" text-anchor="start" fill="#222">contains</text><rect x="816.5" y="281.7" width="294.70000000000005" height="84.0" fill="#30c0f0" stroke="#1a3a48" stroke-width="1.3"/><path d="M816.5 293H1111.2" stroke="#1a3a48" stroke-width="1.1"/><path d="M816.5 337.6H1111.2" stroke="#1a3a48" stroke-width="1.1"/><text x="963.8" y="290.2" font-family="Liberation Sans" font-size="8.8" font-weight="bold" text-anchor="middle" fill="#0a2a3a">Student</text><text x="818.7" y="302.3" font-family="Liberation Sans" font-size="9.2" font-weight="normal" text-anchor="start" fill="#0a2a3a">-studentNr : int</text><text x="818.7" y="312.90000000000003" font-family="Liberation Sans" font-size="9.2" font-weight="normal" text-anchor="start" fill="#0a2a3a">-firstName : string</text><text x="818.7" y="323.5" font-family="Liberation Sans" font-size="9.2" font-weight="normal" text-anchor="start" fill="#0a2a3a">-lastName : string</text><text x="818.7" y="334.1" font-family="Liberation Sans" font-size="9.2" font-weight="normal" text-anchor="start" fill="#0a2a3a">-birthDate : DateTime</text><text x="818.7" y="348" font-family="Liberation Sans" font-size="9.2" font-weight="normal" text-anchor="start" fill="#0a2a3a">+Student(firstName : string, lastName : string, birthDate : DateTime)</text><text x="818.7" y="358.6" font-family="Liberation Sans" font-size="9.2" font-weight="normal" text-anchor="start" fill="#0a2a3a">+getStudentNr() : int</text><rect x="928.6" y="125.7" width="70.10000000000002" height="31.200000000000003" fill="#30c0f0" stroke="#1a3a48" stroke-width="1.3"/><path d="M928.6 147.5H998.7" stroke="#1a3a48" stroke-width="1.1"/><text x="963.6" y="134.2" font-family="Liberation Sans" font-size="8.6" letter-spacing="0.5" text-anchor="middle" fill="#0a2a3a">&lt;&lt;Interface&gt;&gt;</text><text x="963.6" y="144.6" font-family="Liberation Sans" font-size="8.8" font-weight="bold" text-anchor="middle" fill="#0a2a3a">Serializable</text><path d="M962.5 167 V281.7" stroke="#555" stroke-width="1.1" stroke-dasharray="3 2.6"/><path d="M962.5 157.3 L967.3 166.8 L957.7 166.8Z" fill="#30c0f0" stroke="#333" stroke-width="1.1"/><text x="970.6" y="222.4" font-family="Liberation Sans" font-size="9.2" font-weight="normal" text-anchor="start" fill="#222">implements</text></svg><div class="a" style="left:242px;top:51px;width:249.5px;height:482.2px;background:#fff;box-shadow:0 3px 6px rgba(0,0,0,0.35)"></div><div class="a" style="left:242px;top:54px;width:249.5px;height:14.400000000000006px;background:#d6d6d6"></div><div class="t" style="left:249.4px;top:54.99px;font-size:10.3px;line-height:12.88px;color:#111">Use Case Modeling</div><div class="a" style="left:242px;top:151.9px;width:249.5px;height:14.799999999999983px;background:#d6d6d6"></div><div class="t" style="left:249.4px;top:153.35px;font-size:10.7px;line-height:13.38px;color:#111">Structural Modeling</div><div class="a" style="left:242px;top:250.8px;width:249.5px;height:15.0px;background:#d6d6d6"></div><div class="t" style="left:249.4px;top:251.80px;font-size:10.5px;line-height:13.12px;color:#111">Behavioral Modeling</div><div class="a" style="left:242px;top:433.1px;width:249.5px;height:15.0px;background:#d6d6d6"></div><div class="t" style="left:249.4px;top:433.16px;font-size:10.85px;line-height:13.56px;color:#111">Architectural Modeling</div><div class="a" style="left:242.4px;top:449px;width:81.6px;height:81px;background:#1040d0"></div><svg style="left:261px;top:81.4px;" width="46" height="38" viewBox="0 0 46 38"><rect x="1.5" y="1.5" width="43" height="35" fill="#5a4030" opacity="0.25"/><rect x="0.5" y="0.5" width="43" height="35" fill="#e6e4e2" stroke="#a08060" stroke-width="1"/><rect x="1.7" y="1.7" width="40.6" height="32.6" fill="none" stroke="#dcc4a4" stroke-width="1.2"/><path d="M43.5 0.5 V35.5 H0.5" fill="none" stroke="#6e5038" stroke-width="1.1"/><rect x="2.5" y="2.5" width="39" height="31" fill="#ebebeb"/><circle cx="10" cy="13" r="3.3" fill="#2a7ac0" stroke="#1a4a80" stroke-width="0.6"/><path d="M10 16V23M6 19H14M10 23L7 28M10 23L13 28" stroke="#333" stroke-width="0.9"/><ellipse cx="25" cy="10.5" rx="7" ry="4" fill="#2a7ac0" stroke="#1a4a80" stroke-width="0.6"/><ellipse cx="30" cy="26" rx="8.5" ry="5.5" fill="#2a7ac0" stroke="#1a4a80" stroke-width="0.6"/><path d="M13 14L18 11M13 17L23 23" stroke="#333" stroke-width="0.8"/></svg><div class="t" style="left:233px;top:129.4px;font-size:9.8px;line-height:11.8px;width:100px;text-align:center;color:#222">Use Case Diagram</div><svg style="left:261px;top:179.3px;" width="46" height="38" viewBox="0 0 46 38"><rect x="1.5" y="1.5" width="43" height="35" fill="#5a4030" opacity="0.25"/><rect x="0.5" y="0.5" width="43" height="35" fill="#e6e4e2" stroke="#a08060" stroke-width="1"/><rect x="1.7" y="1.7" width="40.6" height="32.6" fill="none" stroke="#dcc4a4" stroke-width="1.2"/><path d="M43.5 0.5 V35.5 H0.5" fill="none" stroke="#6e5038" stroke-width="1.1"/><rect x="2.5" y="2.5" width="39" height="31" fill="#ebebeb"/><rect x="13" y="5" width="18" height="11" fill="#2a7ac0" stroke="#1a4a80" stroke-width="0.7"/><path d="M13 9H31M13 12H31" stroke="#a0d0f0" stroke-width="0.5"/><path d="M22 16V20M10 20H34M10 20V23M34 20V23" stroke="#555" stroke-width="0.8" fill="none"/><rect x="4" y="23" width="13" height="9" fill="#2a7ac0" stroke="#1a4a80" stroke-width="0.7"/><rect x="26" y="21.5" width="14" height="11" fill="#2a7ac0" stroke="#1a4a80" stroke-width="0.7"/><path d="M26 25H40M26 28H40" stroke="#a0d0f0" stroke-width="0.5"/></svg><div class="t" style="left:233px;top:228.6px;font-size:9.8px;line-height:11.8px;width:100px;text-align:center;color:#222">Class Diagram</div><svg style="left:344.5px;top:179.3px;" width="46" height="38" viewBox="0 0 46 38"><rect x="1.5" y="1.5" width="43" height="35" fill="#5a4030" opacity="0.25"/><rect x="0.5" y="0.5" width="43" height="35" fill="#e6e4e2" stroke="#a08060" stroke-width="1"/><rect x="1.7" y="1.7" width="40.6" height="32.6" fill="none" stroke="#dcc4a4" stroke-width="1.2"/><path d="M43.5 0.5 V35.5 H0.5" fill="none" stroke="#6e5038" stroke-width="1.1"/><rect x="2.5" y="2.5" width="39" height="31" fill="#ebebeb"/><ellipse cx="22" cy="18.5" rx="15.5" ry="10.5" fill="#2a7ac0" stroke="#1a4a80" stroke-width="0.7"/><rect x="11" y="16" width="7" height="4" fill="#6ab0e8" stroke="#d0e8f8" stroke-width="0.6"/><rect x="23" y="18" width="8" height="5" fill="#6ab0e8" stroke="#d0e8f8" stroke-width="0.6"/><path d="M18 18H23" stroke="#c0e0f8" stroke-width="0.6"/></svg><div class="t" style="left:316.5px;top:228.6px;font-size:9.8px;line-height:11.8px;width:100px;text-align:center;color:#222">Composite</div><div class="t" style="left:316.5px;top:239.9px;font-size:9.8px;line-height:11.8px;width:100px;text-align:center;color:#222">Structure Diagram</div><svg style="left:428px;top:179.3px;" width="46" height="38" viewBox="0 0 46 38"><rect x="1.5" y="1.5" width="43" height="35" fill="#5a4030" opacity="0.25"/><rect x="0.5" y="0.5" width="43" height="35" fill="#e6e4e2" stroke="#a08060" stroke-width="1"/><rect x="1.7" y="1.7" width="40.6" height="32.6" fill="none" stroke="#dcc4a4" stroke-width="1.2"/><path d="M43.5 0.5 V35.5 H0.5" fill="none" stroke="#6e5038" stroke-width="1.1"/><rect x="2.5" y="2.5" width="39" height="31" fill="#ebebeb"/><rect x="6" y="4" width="14" height="7" fill="#fff" stroke="#333" stroke-width="0.8"/><path d="M13 11V17" stroke="#555" stroke-width="0.8"/><path d="M11 14L13 11L15 14" stroke="#555" fill="none" stroke-width="0.8"/><rect x="4" y="18" width="15" height="9" fill="#2a7ac0" stroke="#1a4a80" stroke-width="0.7"/><rect x="28" y="19" width="12" height="8" fill="#2a7ac0" stroke="#1a4a80" stroke-width="0.7"/><path d="M19 23H28" stroke="#555" stroke-width="0.8"/></svg><div class="t" style="left:400px;top:228.6px;font-size:9.8px;line-height:11.8px;width:100px;text-align:center;color:#222">Object Diagram</div><svg style="left:261px;top:278.2px;" width="46" height="38" viewBox="0 0 46 38"><rect x="1.5" y="1.5" width="43" height="35" fill="#5a4030" opacity="0.25"/><rect x="0.5" y="0.5" width="43" height="35" fill="#e6e4e2" stroke="#a08060" stroke-width="1"/><rect x="1.7" y="1.7" width="40.6" height="32.6" fill="none" stroke="#dcc4a4" stroke-width="1.2"/><path d="M43.5 0.5 V35.5 H0.5" fill="none" stroke="#6e5038" stroke-width="1.1"/><rect x="2.5" y="2.5" width="39" height="31" fill="#ebebeb"/><path d="M3 3H18L19 5H3Z" fill="#d8d0c8" stroke="#888" stroke-width="0.5"/><circle cx="8" cy="8" r="2" fill="#2a7ac0"/><path d="M8 10V13M6 11.5H10" stroke="#333" stroke-width="0.6"/><rect x="15" y="7" width="11" height="5" fill="#f0f0f0" stroke="#333" stroke-width="0.7"/><rect x="29" y="7" width="12" height="5" fill="#2a7ac0" stroke="#1a4a80" stroke-width="0.6"/><path d="M8 14V34M20 12V34M35 12V34" stroke="#3060b0" stroke-width="0.8" stroke-dasharray="1.5 1"/><rect x="7" y="16" width="2" height="16" fill="#2a7ac0"/><rect x="19" y="18" width="2.5" height="12" fill="#2a7ac0"/><rect x="34" y="20" width="2.5" height="9" fill="#2a7ac0"/><path d="M9 18H19M21 21H34M21 28H34" stroke="#333" stroke-width="0.7"/></svg><div class="t" style="left:233px;top:327.5px;font-size:9.8px;line-height:11.8px;width:100px;text-align:center;color:#222">Sequence Diagram</div><svg style="left:344.5px;top:278.2px;" width="46" height="38" viewBox="0 0 46 38"><rect x="1.5" y="1.5" width="43" height="35" fill="#5a4030" opacity="0.25"/><rect x="0.5" y="0.5" width="43" height="35" fill="#e6e4e2" stroke="#a08060" stroke-width="1"/><rect x="1.7" y="1.7" width="40.6" height="32.6" fill="none" stroke="#dcc4a4" stroke-width="1.2"/><path d="M43.5 0.5 V35.5 H0.5" fill="none" stroke="#6e5038" stroke-width="1.1"/><rect x="2.5" y="2.5" width="39" height="31" fill="#ebebeb"/><path d="M3 3H18L19 5H3Z" fill="#d8d0c8" stroke="#888" stroke-width="0.5"/><path d="M3 6H41M3 18H41" stroke="#555" stroke-width="0.7"/><circle cx="11" cy="10" r="2" fill="#2a7ac0"/><path d="M11 12V16M9 14H13M11 16L9 18M11 16L13 18" stroke="#333" stroke-width="0.6"/><path d="M11 18V24" stroke="#333" stroke-width="0.6"/><rect x="5" y="24" width="11" height="6" fill="#fff" stroke="#333" stroke-width="0.7"/><rect x="26" y="23" width="14" height="7" fill="#2a7ac0" stroke="#1a4a80" stroke-width="0.6"/><path d="M16 27H26M21 21V25" stroke="#333" stroke-width="0.7"/><circle cx="21" cy="28" r="1.5" fill="none" stroke="#333" stroke-width="0.5"/></svg><div class="t" style="left:316.5px;top:327.5px;font-size:9.8px;line-height:11.8px;width:100px;text-align:center;color:#222">Communication</div><div class="t" style="left:316.5px;top:338.8px;font-size:9.8px;line-height:11.8px;width:100px;text-align:center;color:#222">Diagram</div><svg style="left:428px;top:278.2px;" width="46" height="38" viewBox="0 0 46 38"><rect x="1.5" y="1.5" width="43" height="35" fill="#5a4030" opacity="0.25"/><rect x="0.5" y="0.5" width="43" height="35" fill="#e6e4e2" stroke="#a08060" stroke-width="1"/><rect x="1.7" y="1.7" width="40.6" height="32.6" fill="none" stroke="#dcc4a4" stroke-width="1.2"/><path d="M43.5 0.5 V35.5 H0.5" fill="none" stroke="#6e5038" stroke-width="1.1"/><rect x="2.5" y="2.5" width="39" height="31" fill="#ebebeb"/><circle cx="6" cy="6" r="3" fill="#222"/><path d="M9 6H30V9" stroke="#333" stroke-width="0.7" fill="none"/><rect x="10" y="9" width="22" height="2" fill="#222"/><path d="M13 11V15M28 11V15" stroke="#333" stroke-width="0.7"/><rect x="7" y="15" width="11" height="7" rx="1" fill="#2a7ac0" stroke="#1a4a80" stroke-width="0.6"/><rect x="23" y="15" width="13" height="7" rx="1" fill="#fff" stroke="#333" stroke-width="0.7"/><path d="M13 22V26M29 22V26" stroke="#333" stroke-width="0.7"/><rect x="10" y="26" width="22" height="2" fill="#222"/><path d="M20 28V31H33" stroke="#333" stroke-width="0.7" fill="none"/><circle cx="36" cy="31" r="2.5" fill="#fff" stroke="#222" stroke-width="0.8"/><circle cx="36" cy="31" r="1.3" fill="#222"/></svg><div class="t" style="left:400px;top:327.5px;font-size:9.8px;line-height:11.8px;width:100px;text-align:center;color:#222">Activity Diagram</div><svg style="left:261px;top:361.3px;" width="46" height="38" viewBox="0 0 46 38"><rect x="1.5" y="1.5" width="43" height="35" fill="#5a4030" opacity="0.25"/><rect x="0.5" y="0.5" width="43" height="35" fill="#e6e4e2" stroke="#a08060" stroke-width="1"/><rect x="1.7" y="1.7" width="40.6" height="32.6" fill="none" stroke="#dcc4a4" stroke-width="1.2"/><path d="M43.5 0.5 V35.5 H0.5" fill="none" stroke="#6e5038" stroke-width="1.1"/><rect x="2.5" y="2.5" width="39" height="31" fill="#ebebeb"/><circle cx="6" cy="10" r="2.8" fill="#222"/><path d="M9 10H13" stroke="#333" stroke-width="0.7"/><rect x="13" y="4" width="24" height="19" fill="#2a7ac0" stroke="#1a4a80" stroke-width="0.7"/><path d="M16 9H28M16 12H24" stroke="#a0d0f0" stroke-width="0.5"/><rect x="25" y="16" width="11" height="4" fill="#fff" stroke="#333" stroke-width="0.5"/><path d="M21 23V30H35" stroke="#333" stroke-width="0.7" fill="none"/><circle cx="37" cy="30" r="2.3" fill="#fff" stroke="#222" stroke-width="0.8"/><circle cx="37" cy="30" r="1.2" fill="#222"/></svg><div class="t" style="left:233px;top:410.6px;font-size:9.8px;line-height:11.8px;width:100px;text-align:center;color:#222">State Machine</div><div class="t" style="left:233px;top:421.90000000000003px;font-size:9.8px;line-height:11.8px;width:100px;text-align:center;color:#222">Diagram</div><svg style="left:344.5px;top:361.3px;" width="46" height="38" viewBox="0 0 46 38"><rect x="1.5" y="1.5" width="43" height="35" fill="#5a4030" opacity="0.25"/><rect x="0.5" y="0.5" width="43" height="35" fill="#e6e4e2" stroke="#a08060" stroke-width="1"/><rect x="1.7" y="1.7" width="40.6" height="32.6" fill="none" stroke="#dcc4a4" stroke-width="1.2"/><path d="M43.5 0.5 V35.5 H0.5" fill="none" stroke="#6e5038" stroke-width="1.1"/><rect x="2.5" y="2.5" width="39" height="31" fill="#ebebeb"/><rect x="5" y="5" width="34" height="26" fill="#2a7ac0" stroke="#1a4a80" stroke-width="0.7"/><path d="M5 16H39" stroke="#a0d0f0" stroke-width="0.6"/><path d="M8 11H18V13H24V10H36M8 23H20V20H27V25H36" stroke="#1a3a68" stroke-width="0.9" fill="none"/></svg><div class="t" style="left:316.5px;top:410.6px;font-size:9.8px;line-height:11.8px;width:100px;text-align:center;color:#222">Timing Diagram</div><svg style="left:428px;top:361.3px;" width="46" height="38" viewBox="0 0 46 38"><rect x="1.5" y="1.5" width="43" height="35" fill="#5a4030" opacity="0.25"/><rect x="0.5" y="0.5" width="43" height="35" fill="#e6e4e2" stroke="#a08060" stroke-width="1"/><rect x="1.7" y="1.7" width="40.6" height="32.6" fill="none" stroke="#dcc4a4" stroke-width="1.2"/><path d="M43.5 0.5 V35.5 H0.5" fill="none" stroke="#6e5038" stroke-width="1.1"/><rect x="2.5" y="2.5" width="39" height="31" fill="#ebebeb"/><path d="M3 3H18L19 5H3Z" fill="#fff" stroke="#555" stroke-width="0.5"/><circle cx="6" cy="9" r="2.5" fill="#222"/><path d="M9 9H27" stroke="#333" stroke-width="0.7"/><rect x="27" y="5" width="13" height="9" fill="#2a7ac0" stroke="#1a4a80" stroke-width="0.6"/><path d="M33 14V19H27" stroke="#333" stroke-width="0.7" fill="none"/><rect x="6" y="15" width="20" height="17" fill="#fff" stroke="#333" stroke-width="0.7"/><rect x="9" y="18" width="5" height="3" fill="#2a7ac0"/><rect x="17" y="18" width="5" height="3" fill="#2a7ac0"/><path d="M11 21V31M19 21V31" stroke="#3060b0" stroke-width="0.6"/><path d="M26 29H35" stroke="#333" stroke-width="0.7"/><circle cx="37" cy="29" r="2.3" fill="#fff" stroke="#222" stroke-width="0.8"/><circle cx="37" cy="29" r="1.2" fill="#222"/></svg><div class="t" style="left:400px;top:410.6px;font-size:9.8px;line-height:11.8px;width:100px;text-align:center;color:#222">Interaction</div><div class="t" style="left:400px;top:421.90000000000003px;font-size:9.8px;line-height:11.8px;width:100px;text-align:center;color:#222">Overview Diagram</div><svg style="left:261px;top:460.0px;" width="46" height="38" viewBox="0 0 46 38"><rect x="1.5" y="1.5" width="43" height="35" fill="#5a4030" opacity="0.25"/><rect x="0.5" y="0.5" width="43" height="35" fill="#e6e4e2" stroke="#a08060" stroke-width="1"/><rect x="1.7" y="1.7" width="40.6" height="32.6" fill="none" stroke="#dcc4a4" stroke-width="1.2"/><path d="M43.5 0.5 V35.5 H0.5" fill="none" stroke="#6e5038" stroke-width="1.1"/><rect x="2.5" y="2.5" width="39" height="31" fill="#ebebeb"/><rect x="11" y="5" width="25" height="26" fill="#2a7ac0" stroke="#1a4a80" stroke-width="0.7"/><rect x="15" y="10" width="9" height="7" fill="#5aaae8" stroke="#a0d0f0" stroke-width="0.5"/><rect x="24" y="23" width="9" height="4" fill="#f0f0f0"/><circle cx="5" cy="12" r="1.5" fill="none" stroke="#333" stroke-width="0.7"/><circle cx="5" cy="17" r="1.5" fill="none" stroke="#333" stroke-width="0.7"/><path d="M6.5 12H11M6.5 17H11M36 11L40 14M36 14L40 11M36 17L40 20M36 20L40 17" stroke="#333" stroke-width="0.6"/></svg><div class="t" style="left:233px;top:509.20000000000005px;font-size:9.8px;line-height:11.8px;width:100px;text-align:center;color:#c8dcfa">Component</div><div class="t" style="left:233px;top:520.5px;font-size:9.8px;line-height:11.8px;width:100px;text-align:center;color:#c8dcfa">Diagram</div><svg style="left:344.5px;top:460.0px;" width="46" height="38" viewBox="0 0 46 38"><rect x="1.5" y="1.5" width="43" height="35" fill="#5a4030" opacity="0.25"/><rect x="0.5" y="0.5" width="43" height="35" fill="#e6e4e2" stroke="#a08060" stroke-width="1"/><rect x="1.7" y="1.7" width="40.6" height="32.6" fill="none" stroke="#dcc4a4" stroke-width="1.2"/><path d="M43.5 0.5 V35.5 H0.5" fill="none" stroke="#6e5038" stroke-width="1.1"/><rect x="2.5" y="2.5" width="39" height="31" fill="#ebebeb"/><rect x="5" y="5" width="13" height="10" fill="#2a7ac0" stroke="#1a4a80" stroke-width="0.7"/><path d="M5 5L7 3H20L18 5M20 3V13L18 15" stroke="#1a4a80" stroke-width="0.6" fill="#5aa0e0"/><path d="M11 15V25H17" stroke="#555" stroke-width="0.7" fill="none"/><rect x="17" y="17" width="21" height="15" fill="#2a7ac0" stroke="#1a4a80" stroke-width="0.7"/><path d="M17 17L20 14H41L38 17M41 14V29L38 32" stroke="#1a4a80" stroke-width="0.6" fill="#5aa0e0"/><rect x="26" y="25" width="9" height="4" fill="#f0f0f0"/></svg><div class="t" style="left:316.5px;top:509.20000000000005px;font-size:9.8px;line-height:11.8px;width:100px;text-align:center;color:#222">Deployment</div><div class="t" style="left:316.5px;top:520.5px;font-size:9.8px;line-height:11.8px;width:100px;text-align:center;color:#222">Diagram</div><svg style="left:428px;top:460.0px;" width="46" height="38" viewBox="0 0 46 38"><rect x="1.5" y="1.5" width="43" height="35" fill="#5a4030" opacity="0.25"/><rect x="0.5" y="0.5" width="43" height="35" fill="#e6e4e2" stroke="#a08060" stroke-width="1"/><rect x="1.7" y="1.7" width="40.6" height="32.6" fill="none" stroke="#dcc4a4" stroke-width="1.2"/><path d="M43.5 0.5 V35.5 H0.5" fill="none" stroke="#6e5038" stroke-width="1.1"/><rect x="2.5" y="2.5" width="39" height="31" fill="#ebebeb"/><path d="M5 5H12V7H22V16H5Z" fill="#2a7ac0" stroke="#1a4a80" stroke-width="0.7"/><path d="M26 13H31V15H40V24H26Z" fill="#2a7ac0" stroke="#1a4a80" stroke-width="0.7"/><path d="M13 16V21" stroke="#555" stroke-width="0.7"/><circle cx="13" cy="19" r="1.5" fill="none" stroke="#555" stroke-width="0.6"/><path d="M5 22H11V24H24V32H5Z" fill="#f0f0f0" stroke="#333" stroke-width="0.7"/><path d="M24 28H33V24" stroke="#333" stroke-width="0.7" fill="none" stroke-dasharray="1 1"/></svg><div class="t" style="left:400px;top:509.20000000000005px;font-size:9.8px;line-height:11.8px;width:100px;text-align:center;color:#222">Package Diagram</div><svg style="left:240px;top:458px;" width="62" height="64" viewBox="0 0 62 64"><circle cx="30.8" cy="32" r="27.3" fill="none" stroke="#d8e448" stroke-width="3.2" opacity="0.95"/></svg><svg style="left:268px;top:487px;" width="12" height="16" viewBox="0 0 12 16"><path d="M1 1 L1 12 L4 9.5 L6.5 14 L8.5 13 L6 8.5 L10 8.5Z" fill="#111" stroke="#eee" stroke-width="0.9"/></svg><svg style="left:1017.6px;top:529.9px;filter:drop-shadow(0 1px 2px rgba(0,0,0,0.45))" width="243" height="182.5" viewBox="0 0 243 182.5"><defs><filter id="bl" x="-5%" y="-5%" width="110%" height="110%"><feGaussianBlur stdDeviation="0.9"/></filter><filter id="bl2" x="-20%" y="-20%" width="140%" height="140%"><feGaussianBlur stdDeviation="3"/></filter><filter id="bl3" x="-20%" y="-20%" width="140%" height="140%"><feGaussianBlur stdDeviation="1.6"/></filter><clipPath id="shirtc"><path d="M0 183 L4 168 Q20 140 60 126 L95 114 L112 118 L148 168 L178 118 L198 114 Q228 124 243 148 L243 183Z"/></clipPath><clipPath id="wc"><rect x="0" y="0" width="243" height="182.5" rx="2"/></clipPath><radialGradient id="face" cx="0.5" cy="0.42" r="0.62"><stop offset="0" stop-color="#d2b6ac"/><stop offset="0.55" stop-color="#bc9a8c"/><stop offset="1" stop-color="#82665a"/></radialGradient><linearGradient id="neck" x1="0" y1="0" x2="1" y2="0"><stop offset="0" stop-color="#7a5a48"/><stop offset="0.5" stop-color="#a88270"/><stop offset="1" stop-color="#8a6a58"/></linearGradient></defs><g clip-path="url(#wc)"><g filter="url(#bl)"><rect width="243" height="183" fill="#cfccc4"/><rect x="0" y="0" width="175" height="20" fill="#dcdad2"/><rect x="22" y="0" width="48" height="4" fill="#1a1a1a"/><rect x="0" y="18" width="110" height="31" fill="#5a5856"/><rect x="0" y="18" width="110" height="6" fill="#9a9892"/><rect x="48" y="17" width="38" height="12" rx="4" fill="#8a8a88"/><rect x="0" y="31" width="18" height="17" fill="#4aa8c4"/><rect x="21" y="26" width="22" height="4" fill="#8a8a88"/><rect x="21" y="35" width="20" height="2" fill="#909090"/><rect x="60" y="30" width="22" height="3" fill="#a0a0a0"/><rect x="60" y="37" width="22" height="3" fill="#909090"/><rect x="82" y="22" width="4" height="26" fill="#d8d8d8"/><rect x="88" y="26" width="14" height="22" fill="#6a6a6a"/><rect x="0" y="49" width="103" height="12" fill="#dddbd3"/><rect x="0" y="59" width="103" height="3" fill="#a29e96"/><rect x="0" y="62" width="100" height="37" fill="#5a6480"/><rect x="0" y="63" width="3" height="36" fill="#3a5a8a"/><rect x="3" y="63" width="4" height="36" fill="#9aa8c0"/><rect x="7" y="63" width="3" height="36" fill="#8a6a5a"/><rect x="10" y="63" width="5" height="36" fill="#2a3a6a"/><rect x="15" y="63" width="3" height="36" fill="#c0c4cc"/><rect x="18" y="63" width="3" height="36" fill="#4a6a9a"/><rect x="21" y="63" width="4" height="36" fill="#6a5a58"/><rect x="25" y="63" width="3" height="36" fill="#3a4a7a"/><rect x="28" y="63" width="5" height="36" fill="#a0b0c0"/><rect x="33" y="63" width="3" height="36" fill="#2a4a7a"/><rect x="36" y="63" width="3" height="36" fill="#5a6a8a"/><rect x="39" y="63" width="4" height="36" fill="#b09080"/><rect x="43" y="63" width="3" height="36" fill="#4a5a8a"/><rect x="46" y="63" width="5" height="36" fill="#d0d0d0"/><rect x="51" y="63" width="3" height="36" fill="#3a5a8a"/><rect x="54" y="63" width="3" height="36" fill="#9aa8c0"/><rect x="57" y="63" width="4" height="36" fill="#8a6a5a"/><rect x="61" y="63" width="3" height="36" fill="#2a3a6a"/><rect x="64" y="63" width="5" height="36" fill="#c0c4cc"/><rect x="69" y="63" width="3" height="36" fill="#4a6a9a"/><rect x="72" y="63" width="3" height="36" fill="#6a5a58"/><rect x="75" y="63" width="4" height="36" fill="#3a4a7a"/><rect x="79" y="63" width="3" height="36" fill="#a0b0c0"/><rect x="82" y="63" width="5" height="36" fill="#2a4a7a"/><rect x="87" y="63" width="3" height="36" fill="#5a6a8a"/><rect x="90" y="63" width="3" height="36" fill="#b09080"/><rect x="93" y="63" width="4" height="36" fill="#4a5a8a"/><rect x="97" y="63" width="3" height="36" fill="#d0d0d0"/><rect x="100" y="63" width="5" height="36" fill="#3a5a8a"/><rect x="0" y="98" width="105" height="14" fill="#dad8d0"/><rect x="0" y="110" width="105" height="3" fill="#9a968e"/><rect x="0" y="113" width="100" height="55" fill="#4a4c5a"/><rect x="0" y="114" width="5" height="55" fill="#d8d8d8"/><rect x="5" y="114" width="6" height="55" fill="#e0e0e0"/><rect x="11" y="114" width="4" height="55" fill="#3060b0"/><rect x="15" y="114" width="5" height="55" fill="#c8c8c8"/><rect x="20" y="114" width="6" height="55" fill="#2a58a8"/><rect x="26" y="114" width="5" height="55" fill="#d0d0d0"/><rect x="31" y="114" width="6" height="55" fill="#6a5a58"/><rect x="37" y="114" width="4" height="55" fill="#2a4a8a"/><rect x="41" y="114" width="5" height="55" fill="#b8b8b8"/><rect x="46" y="114" width="6" height="55" fill="#3a3a48"/><rect x="52" y="114" width="5" height="55" fill="#d8d8d8"/><rect x="57" y="114" width="6" height="55" fill="#e0e0e0"/><rect x="63" y="114" width="4" height="55" fill="#3060b0"/><rect x="67" y="114" width="5" height="55" fill="#c8c8c8"/><rect x="72" y="114" width="6" height="55" fill="#2a58a8"/><rect x="78" y="114" width="5" height="55" fill="#d0d0d0"/><rect x="83" y="114" width="6" height="55" fill="#6a5a58"/><rect x="89" y="114" width="4" height="55" fill="#2a4a8a"/><rect x="93" y="114" width="5" height="55" fill="#b8b8b8"/><rect x="98" y="114" width="6" height="55" fill="#3a3a48"/><rect x="168" y="0" width="75" height="183" fill="#d6d2c6"/><rect x="229" y="0" width="14" height="183" fill="#d2c8a2"/><path d="M228 9 Q238 10 236 20 Q234 25 229 26" stroke="#5a4020" stroke-width="0.8" fill="none"/><rect x="170" y="2" width="52" height="36" fill="#dcdad4"/><rect x="196" y="14" width="8" height="22" fill="#5a5a58"/><rect x="182" y="27" width="38" height="8" fill="#e8e8e4"/><rect x="177" y="36" width="45" height="5" fill="#6a6a68"/><rect x="172" y="28" width="6" height="6" fill="#c04040"/><rect x="170" y="41" width="58" height="9" fill="#b8927a"/><rect x="172" y="50" width="55" height="48" fill="#2c2a30"/><rect x="176" y="52" width="7" height="46" fill="#e2e2e2"/><rect x="184" y="56" width="8" height="42" fill="#6a4a42"/><rect x="196" y="55" width="6" height="43" fill="#1a1a20"/><rect x="205" y="55" width="9" height="43" fill="#3a3a40"/><rect x="216" y="52" width="6" height="46" fill="#e0e0e0"/><rect x="160" y="97" width="80" height="16" fill="#dddbd3"/><rect x="160" y="111" width="80" height="4" fill="#9a968e"/><rect x="196" y="113" width="44" height="50" fill="#7a5a50"/><rect x="206" y="113" width="10" height="40" fill="#b04838"/><rect x="225" y="113" width="12" height="60" fill="#e0dcd0"/></g><g filter="url(#bl3)"><path d="M94 62 Q90 3 142 1.5 Q192 2 192 50 L186 80 L100 85Z" fill="#3a3028"/><ellipse cx="99" cy="66" rx="6.5" ry="15" fill="#a87866"/><ellipse cx="184" cy="64" rx="5" ry="13" fill="#8a6a58"/><path d="M106 100 L172 100 L174 155 L108 155Z" fill="url(#neck)"/><path d="M104 42 Q104 10 142 9 Q180 10 181 40 L180 88 Q175 128 145 132 Q112 128 106 90Z" fill="url(#face)"/><ellipse cx="143" cy="24" rx="30" ry="13" fill="#d8bcb4" opacity="0.55"/><ellipse cx="145" cy="108" rx="32" ry="22" fill="#988a84" opacity="0.32"/><ellipse cx="122" cy="72" rx="10" ry="12" fill="#c88a80" opacity="0.35"/><ellipse cx="172" cy="70" rx="8" ry="12" fill="#b07870" opacity="0.35"/><path d="M108 60 Q110 100 125 122 L108 100Z" fill="#7a5a4a" opacity="0.6"/><path d="M180 55 Q178 100 168 122 L180 95Z" fill="#7a5a4a" opacity="0.6"/></g><g filter="url(#bl)"><path d="M114 37 Q125 30 140 35" stroke="#3a2a22" stroke-width="3.5" fill="none"/><path d="M156 35 Q166 30 178 38" stroke="#3a2a22" stroke-width="3.5" fill="none"/><ellipse cx="128" cy="51" rx="9" ry="4.5" fill="#8a6a62"/><ellipse cx="165" cy="51" rx="8" ry="4.5" fill="#8a6a62"/><ellipse cx="129" cy="51" rx="4.5" ry="2.3" fill="#3a2a24"/><ellipse cx="165" cy="51.5" rx="4.5" ry="2.3" fill="#3a2a24"/><path d="M150 55 L147 68" stroke="#e0c8c0" stroke-width="4" fill="none" opacity="0.6"/><path d="M140 72 Q148 78 158 72" stroke="#7a5a50" stroke-width="2.5" fill="none"/><path d="M134 89 Q149 85 164 89" stroke="#6a4a42" stroke-width="3" fill="none"/></g><g filter="url(#bl)"><g clip-path="url(#shirtc)"><rect x="0" y="100" width="243" height="83" fill="#c8c4c8"/><rect x="14" y="120" width="5" height="63" fill="#a04838" opacity="0.7"/><rect x="30" y="120" width="6" height="63" fill="#c85040" opacity="0.7"/><rect x="50" y="120" width="4" height="63" fill="#6a6aa0" opacity="0.7"/><rect x="66" y="120" width="7" height="63" fill="#d05848" opacity="0.7"/><rect x="80" y="120" width="4" height="63" fill="#8a7aa0" opacity="0.7"/><rect x="128" y="120" width="6" height="63" fill="#3a58a8" opacity="0.7"/><rect x="140" y="120" width="8" height="63" fill="#c84838" opacity="0.7"/><rect x="152" y="120" width="5" height="63" fill="#b04840" opacity="0.7"/><rect x="168" y="120" width="6" height="63" fill="#3a58a0" opacity="0.7"/><rect x="184" y="120" width="6" height="63" fill="#d05040" opacity="0.7"/><rect x="198" y="120" width="5" height="63" fill="#4a5a98" opacity="0.7"/><rect x="218" y="120" width="5" height="63" fill="#c85848" opacity="0.7"/><rect x="232" y="120" width="6" height="63" fill="#8a4a48" opacity="0.7"/><rect x="0" y="150" width="243" height="3" fill="#c85040" opacity="0.3"/><rect x="0" y="162" width="243" height="3" fill="#4a5aa0" opacity="0.3"/><rect x="0" y="174" width="243" height="3" fill="#c85040" opacity="0.3"/></g><path d="M88 118 L104 108 L116 118 L124 160 L112 150Z" fill="#dcdce2"/><path d="M176 114 L196 110 L222 136 L216 150 L190 146Z" fill="#d2d0d6"/><path d="M122 150 Q146 168 172 146 L160 178 L134 178Z" fill="#c4c0c2"/></g></g></svg><div class="a" style="left:29.5px;top:713.8px;width:66px;height:7px;background:#60c4ee"></div><svg style="left:0px;top:690px;" width="220" height="30" viewBox="0 0 220 30"><text x="18" y="22.2" font-family="Liberation Sans" font-weight="bold" font-size="15" letter-spacing="-0.05" fill="#fff" stroke="#000" stroke-width="4.8" stroke-linejoin="round" paint-order="stroke">Screencast-O-Matic.com</text></svg><div class="a" style="left:0px;top:0px;width:12px;height:720px;background:#000"></div><div class="a" style="left:1268px;top:0px;width:12px;height:720px;background:#000"></div></body></html>
